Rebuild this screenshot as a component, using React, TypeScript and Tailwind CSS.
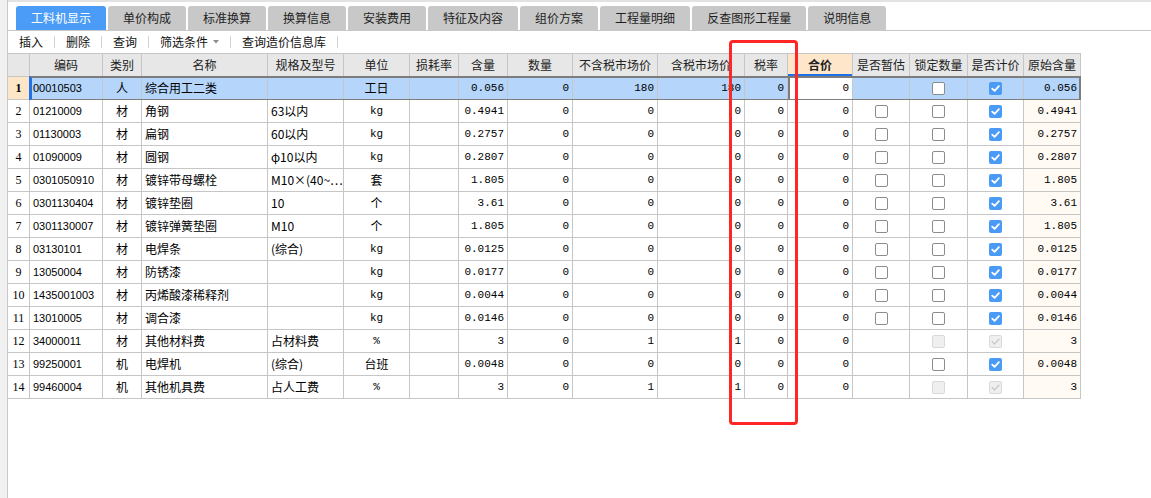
import React from "react";

type Row = {
  no: number;
  code: string;
  kind: string;
  name: string;
  spec: string;
  unit: string;
  qty: string;
  num: string;
  p1: string;
  p2: string;
  est: "none" | "off";
  lock: "off" | "dis";
  calc: "on" | "dis";
};

const rows: Row[] = [
  { no: 1, code: "00010503", kind: "人", name: "综合用工二类", spec: "", unit: "工日", qty: "0.056", num: "0", p1: "180", p2: "180", est: "none", lock: "off", calc: "on" },
  { no: 2, code: "01210009", kind: "材", name: "角钢", spec: "63以内", unit: "kg", qty: "0.4941", num: "0", p1: "0", p2: "0", est: "off", lock: "off", calc: "on" },
  { no: 3, code: "01130003", kind: "材", name: "扁钢", spec: "60以内", unit: "kg", qty: "0.2757", num: "0", p1: "0", p2: "0", est: "off", lock: "off", calc: "on" },
  { no: 4, code: "01090009", kind: "材", name: "圆钢", spec: "φ10以内", unit: "kg", qty: "0.2807", num: "0", p1: "0", p2: "0", est: "off", lock: "off", calc: "on" },
  { no: 5, code: "0301050910", kind: "材", name: "镀锌带母螺栓", spec: "M10×(40~…", unit: "套", qty: "1.805", num: "0", p1: "0", p2: "0", est: "off", lock: "off", calc: "on" },
  { no: 6, code: "0301130404", kind: "材", name: "镀锌垫圈", spec: "10", unit: "个", qty: "3.61", num: "0", p1: "0", p2: "0", est: "off", lock: "off", calc: "on" },
  { no: 7, code: "0301130007", kind: "材", name: "镀锌弹簧垫圈", spec: "M10", unit: "个", qty: "1.805", num: "0", p1: "0", p2: "0", est: "off", lock: "off", calc: "on" },
  { no: 8, code: "03130101", kind: "材", name: "电焊条", spec: "(综合)", unit: "kg", qty: "0.0125", num: "0", p1: "0", p2: "0", est: "off", lock: "off", calc: "on" },
  { no: 9, code: "13050004", kind: "材", name: "防锈漆", spec: "", unit: "kg", qty: "0.0177", num: "0", p1: "0", p2: "0", est: "off", lock: "off", calc: "on" },
  { no: 10, code: "1435001003", kind: "材", name: "丙烯酸漆稀释剂", spec: "", unit: "kg", qty: "0.0044", num: "0", p1: "0", p2: "0", est: "off", lock: "off", calc: "on" },
  { no: 11, code: "13010005", kind: "材", name: "调合漆", spec: "", unit: "kg", qty: "0.0146", num: "0", p1: "0", p2: "0", est: "off", lock: "off", calc: "on" },
  { no: 12, code: "34000011", kind: "材", name: "其他材料费", spec: "占材料费", unit: "%", qty: "3", num: "0", p1: "1", p2: "1", est: "none", lock: "dis", calc: "dis" },
  { no: 13, code: "99250001", kind: "机", name: "电焊机", spec: "(综合)", unit: "台班", qty: "0.0048", num: "0", p1: "0", p2: "0", est: "none", lock: "off", calc: "on" },
  { no: 14, code: "99460004", kind: "机", name: "其他机具费", spec: "占人工费", unit: "%", qty: "3", num: "0", p1: "1", p2: "1", est: "none", lock: "dis", calc: "dis" },
];

const tabs = ["工料机显示", "单价构成", "标准换算", "换算信息", "安装费用", "特征及内容", "组价方案", "工程量明细", "反查图形工程量", "说明信息"];
const tools = ["插入", "删除", "查询", "筛选条件", "查询造价信息库"];
const heads = ["", "编码", "类别", "名称", "规格及型号", "单位", "损耗率", "含量", "数量", "不含税市场价", "含税市场价", "税率", "合价", "是否暂估", "锁定数量", "是否计价", "原始含量"];

const gridCols =
  "grid grid-cols-[22px_73px_39px_126px_76px_66px_49px_49px_65px_85px_87px_43px_65px_57px_58px_56px_57px]";
const cell = "h-[23px] border-r border-b border-[#c6c6c6] flex items-center px-[3px] overflow-hidden whitespace-nowrap";
const cjk = "font-['Noto_Sans_CJK_SC',sans-serif] text-[12px] leading-none";
const num = "font-['Liberation_Mono','Noto_Sans_CJK_SC',monospace] text-[11px] leading-none";

function Box({ state }: { state: "on" | "off" | "dis" | "dison" }) {
  if (state === "on")
    return (
      <span className="flex h-[13px] w-[13px] items-center justify-center rounded-[2px] bg-[#4a9bf5]">
        <svg width="11" height="11" viewBox="0 0 11 11">
          <path d="M2.2 5.6 L4.6 7.9 L8.9 3.2" fill="none" stroke="#fff" strokeWidth="1.8" strokeLinecap="round" strokeLinejoin="round" />
        </svg>
      </span>
    );
  if (state === "dison")
    return (
      <span className="flex h-[13px] w-[13px] items-center justify-center rounded-[2px] border border-[#d9d9d9] bg-[#efefef]">
        <svg width="11" height="11" viewBox="0 0 11 11">
          <path d="M2.2 5.6 L4.6 7.9 L8.9 3.2" fill="none" stroke="#c9c9c9" strokeWidth="1.4" strokeLinecap="round" strokeLinejoin="round" />
        </svg>
      </span>
    );
  if (state === "dis")
    return <span className="h-[13px] w-[13px] rounded-[2px] border border-[#d9d9d9] bg-[#efefef]" />;
  return <span className="h-[13px] w-[13px] rounded-[2px] border border-[#8c8c8c] bg-white" />;
}

function DataRow({ r }: { r: Row }) {
  const sel = r.no === 1;
  const bg = sel ? "bg-[#b5d5fa]" : "bg-white";
  const orig = sel ? "bg-[#b5d5fa]" : "bg-[#fffaf3]";
  return (
    <div className={`relative ${gridCols} text-black`}>
      <div
        className={`${cell} justify-center font-['Liberation_Serif',serif] text-[12px] ${
          sel ? "bg-[#fde5c8] font-bold" : "bg-white"
        }`}
      >
        {r.no}
      </div>
      <div className={`${cell} ${bg} font-['Liberation_Sans',sans-serif] text-[11px]`}>{r.code}</div>
      <div className={`${cell} ${bg} ${cjk} justify-center`}>{r.kind}</div>
      <div className={`${cell} ${bg} ${cjk}`}>{r.name}</div>
      <div className={`${cell} ${bg} ${cjk}`}>{r.spec}</div>
      <div className={`${cell} ${bg} justify-center ${r.unit === "kg" || r.unit === "%" ? num : cjk}`}>{r.unit}</div>
      <div className={`${cell} ${bg}`} />
      <div className={`${cell} ${bg} ${num} justify-end`}>{r.qty}</div>
      <div className={`${cell} ${bg} ${num} justify-end`}>{r.num}</div>
      <div className={`${cell} ${bg} ${num} justify-end`}>{r.p1}</div>
      <div className={`${cell} ${bg} ${num} justify-end`}>{r.p2}</div>
      <div className={`${cell} ${bg} ${num} justify-end`}>0</div>
      <div className={`${cell} ${num} justify-end ${sel ? "bg-white shadow-[inset_2px_0_0_#7d7d7d]" : "bg-white"}`}>0</div>
      <div className={`${cell} ${bg} justify-center`}>{r.est === "off" && <Box state="off" />}</div>
      <div className={`${cell} ${bg} justify-center`}>
        <Box state={r.lock === "dis" ? "dis" : "off"} />
      </div>
      <div className={`${cell} ${bg} justify-center`}>
        <Box state={r.calc === "dis" ? "dison" : "on"} />
      </div>
      <div className={`${cell} ${orig} ${num} justify-end`}>{r.qty}</div>
      {sel && (
        <div className="pointer-events-none absolute bottom-[-1px] left-[21px] right-0 top-[-1px] border-2 border-[#7d7d7d] border-l-[3px] border-l-[#1f72ea]" />
      )}
    </div>
  );
}

export default function App() {
  return (
    <div className="relative flex h-[498px] w-[1151px] overflow-hidden bg-white">
      <div className="w-[8px] shrink-0 border-r border-[#c9c9c9] bg-[#f1f1f1]" />
      <div className="flex min-w-0 flex-1 flex-col">
        <div className="h-[2px] bg-[#e2e2e2]" />
        <div className="flex gap-[2px] border-b border-[#c8c8c8] pl-[8px] pt-[4px]">
          {tabs.map((t, i) => (
            <div
              key={t}
              className={`flex h-[24px] items-center rounded-t-[3px] px-[15px] ${cjk} ${
                i === 0 ? "bg-[#4a9cf6] text-white" : "bg-[#c8c8c8] text-[#1e1e1e]"
              }`}
            >
              {t}
            </div>
          ))}
        </div>
        <div className="flex h-[22px] items-center pl-[-1px] text-[#111]">
          {tools.map((t) => (
            <React.Fragment key={t}>
              <div className={`flex items-center gap-[5px] px-[11px] ${cjk}`}>
                {t}
                {t === "筛选条件" && (
                  <svg width="6" height="4" viewBox="0 0 6 4">
                    <path d="M0 0 L6 0 L3 3.5 Z" fill="#8a8a8a" />
                  </svg>
                )}
              </div>
              <div className="h-[12px] w-px bg-[#d2d2d2]" />
            </React.Fragment>
          ))}
        </div>
        <div className="w-fit border-t border-[#c6c6c6]">
          <div className={`${gridCols} text-[#222]`}>
            {heads.map((h, i) => (
              <div
                key={i}
                className={`${cell} justify-center ${cjk} ${
                  h === "合价"
                    ? "bg-[#fde6c9] font-bold shadow-[inset_0_-2px_0_#1f6fe6]"
                    : "bg-[#e7e7e7]"
                }`}
              >
                {h}
              </div>
            ))}
          </div>
          {rows.map((r) => (
            <DataRow key={r.no} r={r} />
          ))}
        </div>
      </div>
      <div className="pointer-events-none absolute left-[729px] top-[40px] h-[385px] w-[69px] rounded-[4px] border-[3px] border-[#ff2626]" />
    </div>
  );
}
